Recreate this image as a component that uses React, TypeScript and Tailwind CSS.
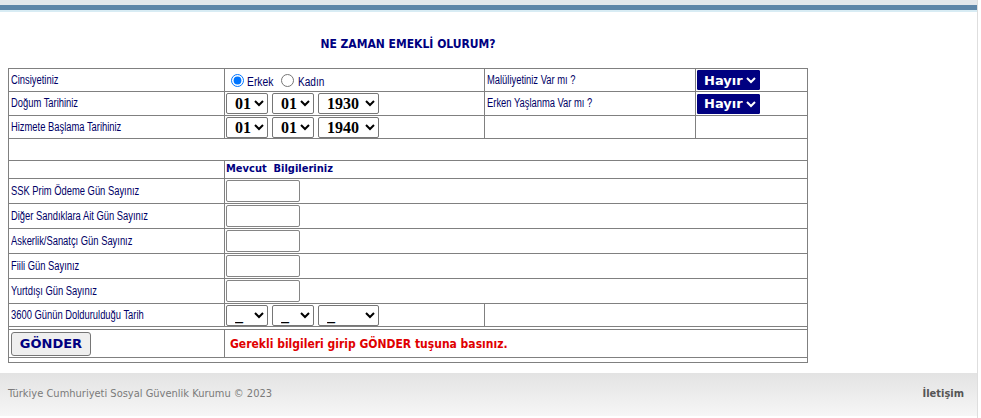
import React from "react";

const B = "border-[#808080]";
const labelFont = "font-['Liberation_Sans',Arial,sans-serif] text-[12.5px] text-[#000066]";
const tah = "font-['DejaVu_Sans_Condensed','DejaVu_Sans',sans-serif]";

function Narrow({ children, s = "scale-x-[0.75]" }: { children: React.ReactNode; s?: string }) {
  return <span className={`inline-block whitespace-nowrap origin-left ${s}`}>{children}</span>;
}

function DateSel({ w, opts }: { w: string; opts: string[] }) {
  return (
    <select
      className={`${w} h-[21px] border border-[#767676] rounded-[2px] bg-white pl-[4px] font-['Liberation_Serif',serif] font-bold text-[16px] text-black`}
      defaultValue={opts[0]}
    >
      {opts.map((o) => (
        <option key={o} value={o}>
          {o}
        </option>
      ))}
    </select>
  );
}

function Hayir() {
  return (
    <select
      className="w-[63px] h-[20px] ml-[1px] bg-[#000080] text-white pl-[2px] font-['DejaVu_Sans',sans-serif] font-bold text-[13px] border border-[#000080] rounded-[1px]"
      defaultValue="Hayır"
    >
      <option value="Hayır">Hayır</option>
      <option value="Evet">Evet</option>
    </select>
  );
}

function Dates({ a, b, c }: { a: string; b: string; c: string }) {
  return (
    <div className="flex items-center gap-[4px] pl-[1px]">
      <DateSel w="w-[42px]" opts={[a]} />
      <DateSel w="w-[42px]" opts={[b]} />
      <DateSel w="w-[61px]" opts={[c]} />
    </div>
  );
}

function LabelCell({ text, w = "w-[216px]" }: { text: string; w?: string }) {
  return (
    <div className={`${w} border-r ${B} flex items-center pl-[2px] overflow-hidden ${labelFont}`}>
      <Narrow>{text}</Narrow>
    </div>
  );
}

function InputRow({ text }: { text: string }) {
  return (
    <div className={`flex h-[25px] border-b ${B}`}>
      <LabelCell text={text} />
      <div className="flex-1 flex items-center pl-[1px]">
        <input
          type="text"
          className="w-[74px] h-[22px] border border-[#858585] rounded-[2px] bg-white"
        />
      </div>
    </div>
  );
}

export default function App() {
  return (
    <div className="w-[978px] h-[418px] bg-white border-r border-[#dedede] overflow-hidden">
      <div className="h-[5px] bg-[#e4e7eb]" />
      <div className="h-[5px] bg-[#5f86a8]" />
      <div className="h-[2px] bg-[#d8ecf4]" />

      <div
        className={`ml-[8px] w-[800px] mt-[25px] h-[14px] leading-[14px] text-center ${tah} font-bold text-[12px] text-[#000080]`}
      >
        NE ZAMAN EMEKLİ OLURUM?
      </div>

      <div className={`ml-[8px] mt-[17px] w-[800px] border ${B}`}>
        {/* row 1 */}
        <div className={`flex h-[23px] border-b ${B}`}>
          <LabelCell text="Cinsiyetiniz" />
          <div className={`w-[260px] border-r ${B} flex items-center font-['Liberation_Sans',Arial,sans-serif] text-[12px] text-[#000066]`}>
            <input type="radio" name="g" defaultChecked className="w-[13px] h-[13px] ml-[6px] mr-[3px]" />
            <span className="mt-[3px] w-[26px]">
              <Narrow s="scale-x-[0.86]">Erkek</Narrow>
            </span>
            <input type="radio" name="g" className="w-[13px] h-[13px] ml-[8px] mr-[4px]" />
            <span className="mt-[3px]">
              <Narrow s="scale-x-[0.84]">Kadın</Narrow>
            </span>
          </div>
          <LabelCell text="Malüliyetiniz Var mı ?" w="w-[211px]" />
          <div className="flex-1 flex items-center">
            <Hayir />
          </div>
        </div>
        {/* row 2 */}
        <div className={`flex h-[24px] border-b ${B}`}>
          <LabelCell text="Doğum Tarihiniz" />
          <div className={`w-[260px] border-r ${B} flex items-center`}>
            <Dates a="01" b="01" c="1930" />
          </div>
          <LabelCell text="Erken Yaşlanma Var mı ?" w="w-[211px]" />
          <div className="flex-1 flex items-center">
            <Hayir />
          </div>
        </div>
        {/* row 3 */}
        <div className={`flex h-[23px] border-b ${B}`}>
          <LabelCell text="Hizmete Başlama Tarihiniz" />
          <div className={`w-[260px] border-r ${B} flex items-center`}>
            <Dates a="01" b="01" c="1940" />
          </div>
          <div className={`w-[211px] border-r ${B}`} />
          <div className="flex-1" />
        </div>
        {/* row 4 */}
        <div className={`h-[22px] border-b ${B}`} />
        {/* row 5 */}
        <div className={`flex h-[18px] border-b ${B}`}>
          <div className={`w-[216px] border-r ${B}`} />
          <div className={`flex-1 flex items-center pl-[1px] ${tah} font-bold text-[11px] text-[#000080]`}>
            Mevcut&nbsp; Bilgileriniz
          </div>
        </div>
        <InputRow text="SSK Prim Ödeme Gün Sayınız" />
        <InputRow text="Diğer Sandıklara Ait Gün Sayınız" />
        <InputRow text="Askerlik/Sanatçı Gün Sayınız" />
        <InputRow text="Fiili Gün Sayınız" />
        <InputRow text="Yurtdışı Gün Sayınız" />
        {/* row 3600 */}
        <div className={`flex h-[23px] border-b ${B}`}>
          <LabelCell text="3600 Günün Doldurulduğu Tarih" />
          <div className={`w-[260px] border-r ${B} flex items-center`}>
            <Dates a="_" b="_" c="_" />
          </div>
          <div className="flex-1" />
        </div>
        <div className="h-[2px]" />
        <div className={`flex h-[29px] border-t border-b ${B}`}>
          <div className={`w-[216px] border-r ${B} flex items-center pl-[2px]`}>
            <button
              type="button"
              className="w-[80px] h-[24px] bg-[#efefef] border border-[#767676] rounded-[3px] font-['DejaVu_Sans',sans-serif] font-bold text-[13px] text-[#000080]"
            >
              GÖNDER
            </button>
          </div>
          <div className={`flex-1 flex items-center pl-[5px] ${tah} font-bold text-[12px] text-[#e00000]`}>
            Gerekli bilgileri girip GÖNDER tuşuna basınız.
          </div>
        </div>
        <div className="h-[4px]" />
      </div>

      <div
        className={`mt-[10px] h-[43px] bg-gradient-to-b from-[#e3e3e3] to-[#f6f6f6] flex items-center justify-between pl-[8px] pr-[13px] ${tah} text-[11px] text-[#7a7a7a]`}
      >
        <span>Türkiye Cumhuriyeti Sosyal Güvenlik Kurumu © 2023</span>
        <span className="font-bold text-[#555555]">İletişim</span>
      </div>
    </div>
  );
}
